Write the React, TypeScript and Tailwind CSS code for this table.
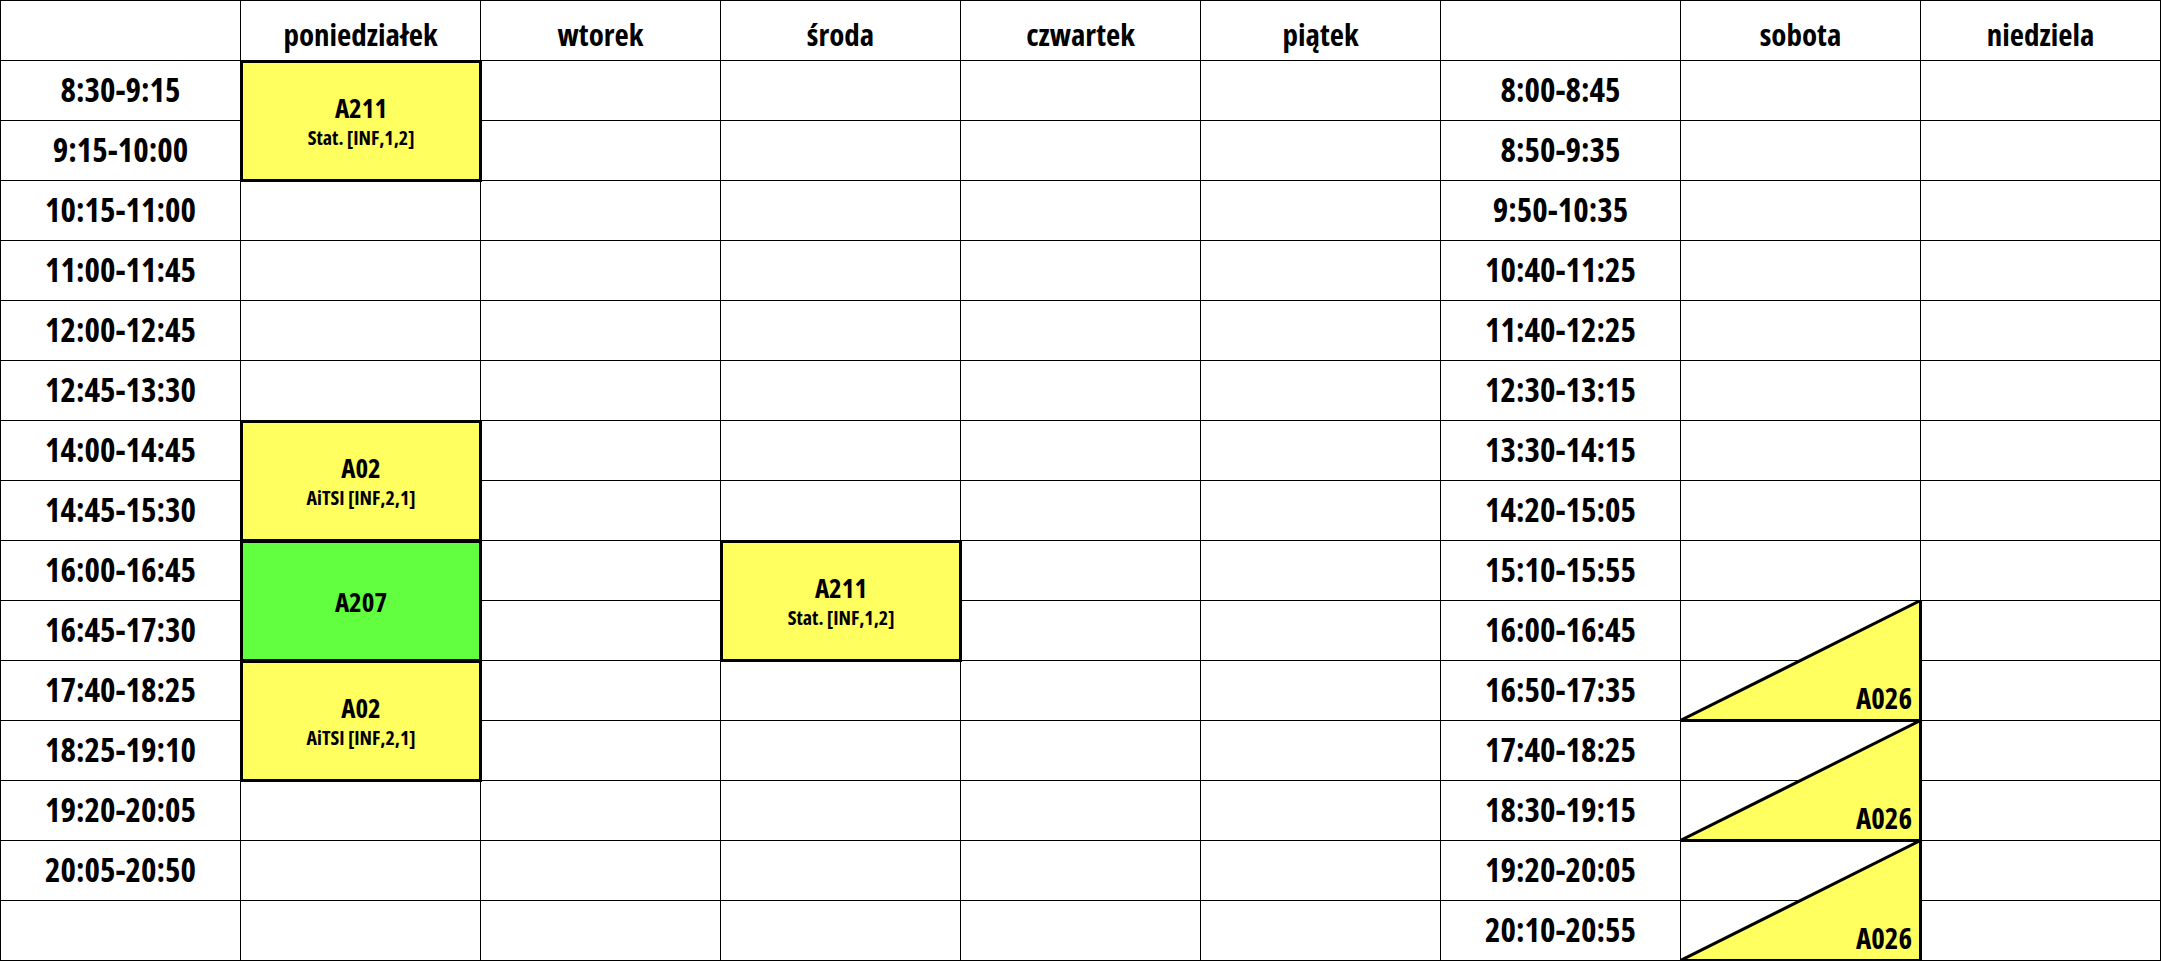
const COL = [
  'col-start-1', 'col-start-2', 'col-start-3', 'col-start-4', 'col-start-5',
  'col-start-6', 'col-start-7', 'col-start-8', 'col-start-9',
];
const ROW = [
  'row-start-1', 'row-start-2', 'row-start-3', 'row-start-4', 'row-start-5', 'row-start-6',
  'row-start-7', 'row-start-8', 'row-start-9', 'row-start-10', 'row-start-11', 'row-start-12',
  'row-start-13', 'row-start-14', 'row-start-15', 'row-start-16',
];

const days = ['', 'poniedziałek', 'wtorek', 'środa', 'czwartek', 'piątek', '', 'sobota', 'niedziela'];

const weekHours = [
  '8:30-9:15', '9:15-10:00', '10:15-11:00', '11:00-11:45', '12:00-12:45',
  '12:45-13:30', '14:00-14:45', '14:45-15:30', '16:00-16:45', '16:45-17:30',
  '17:40-18:25', '18:25-19:10', '19:20-20:05', '20:05-20:50', '',
];

const weekendHours = [
  '8:00-8:45', '8:50-9:35', '9:50-10:35', '10:40-11:25', '11:40-12:25',
  '12:30-13:15', '13:30-14:15', '14:20-15:05', '15:10-15:55', '16:00-16:45',
  '16:50-17:35', '17:40-18:25', '18:30-19:15', '19:20-20:05', '20:10-20:55',
];

// col = day column, row = first time slot (0-based)
const classes = [
  { col: 1, row: 0, room: 'A211', subject: 'Stat. [INF,1,2]', bg: 'bg-[#ffff60]' },
  { col: 1, row: 6, room: 'A02', subject: 'AiTSI [INF,2,1]', bg: 'bg-[#ffff60]' },
  { col: 1, row: 8, room: 'A207', subject: '', bg: 'bg-[#62ff40]' },
  { col: 1, row: 10, room: 'A02', subject: 'AiTSI [INF,2,1]', bg: 'bg-[#ffff60]' },
  { col: 3, row: 8, room: 'A211', subject: 'Stat. [INF,1,2]', bg: 'bg-[#ffff60]' },
];

const halfSlots = [
  { col: 7, row: 9, room: 'A026' },
  { col: 7, row: 11, room: 'A026' },
  { col: 7, row: 13, room: 'A026' },
];

function Triangle({ col, row, room }: { col: number; row: number; room: string }) {
  return (
    <div className={`${COL[col]} ${ROW[row + 1]} row-span-2 -m-px relative flex items-end justify-end pr-[10px] pb-[10px]`}>
      <svg className="absolute inset-0" width="242" height="122" viewBox="0 0 242 122">
        <polygon
          points="0.5,120.5 240.5,0.5 240.5,120.5"
          fill="#ffff60"
          stroke="#000"
          strokeWidth="3"
          strokeLinejoin="bevel"
        />
      </svg>
      <span className="relative text-[29px] font-bold leading-none">{room}</span>
    </div>
  );
}

export default function App() {
  return (
    <div className="bg-white w-[2161px] h-[961px] text-black font-['Open_Sans'] font-stretch-condensed">
      <div className="grid grid-cols-[repeat(9,240px)] grid-rows-[repeat(16,60px)] border-l border-t border-black">
        {days.map((d, c) => (
          <div
            key={'h' + c}
            className={`${COL[c]} ${ROW[0]} border-r border-b border-black flex items-center justify-center pt-[8px] text-[31px] font-bold`}
          >
            {d}
          </div>
        ))}
        {weekHours.map((_, r) =>
          days.map((_, c) => {
            let label = '';
            if (c === 0) label = weekHours[r];
            if (c === 6) label = weekendHours[r];
            return (
              <div
                key={r + '-' + c}
                className={`${COL[c]} ${ROW[r + 1]} border-r border-b border-black flex items-center justify-center pb-[2px] text-[33px] font-bold`}
              >
                {label}
              </div>
            );
          })
        )}
        {classes.map((e, i) => (
          <div
            key={'e' + i}
            className={`${COL[e.col]} ${ROW[e.row + 1]} row-span-2 -m-px border-[3px] border-black ${e.bg} flex flex-col items-center justify-center gap-[7px] font-bold`}
          >
            <span className="text-[27px] leading-none">{e.room}</span>
            {e.subject && <span className="text-[20px] leading-none">{e.subject}</span>}
          </div>
        ))}
        {halfSlots.map((t, i) => (
          <Triangle key={'t' + i} {...t} />
        ))}
      </div>
    </div>
  );
}
